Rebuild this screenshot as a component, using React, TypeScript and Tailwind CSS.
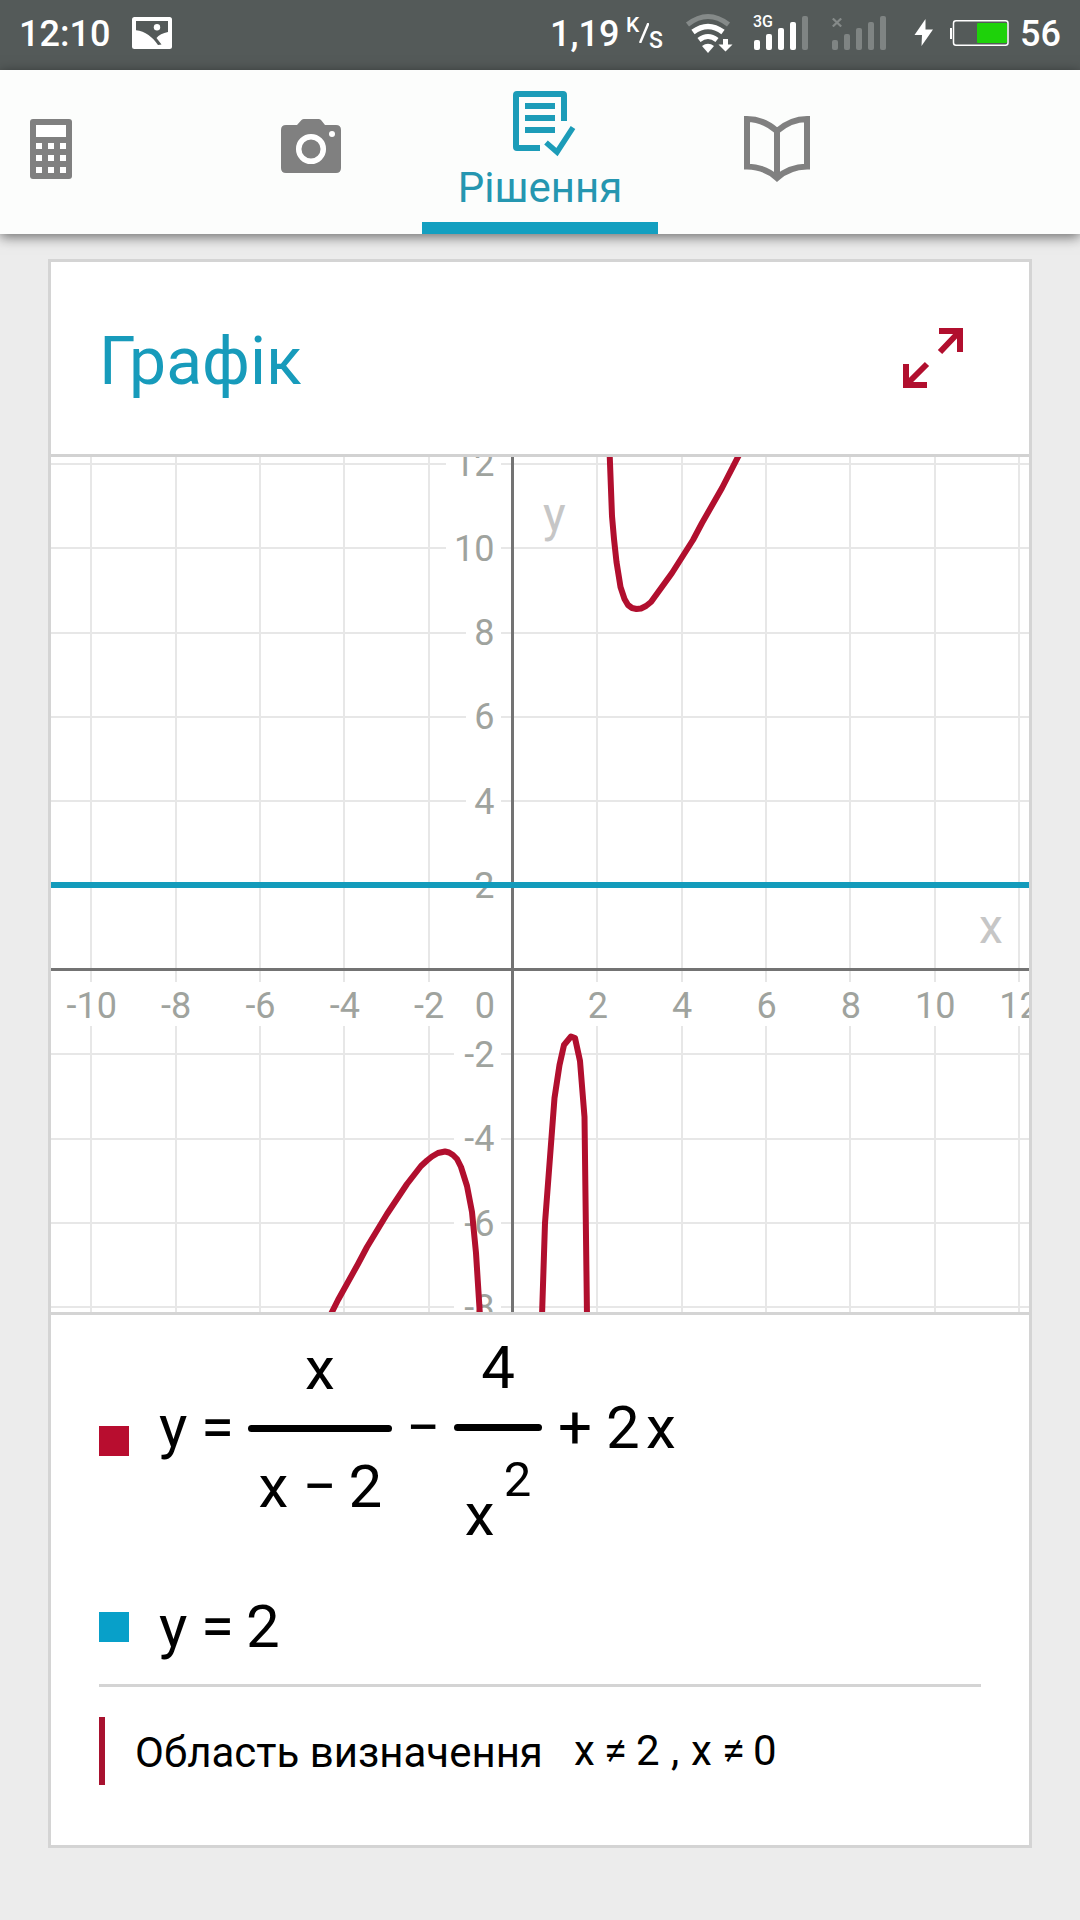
import React from "react";

const RED = "#b10f2e";
const BLUE = "#139bbb";

/* ---------- status bar ---------- */

function PictureIcon() {
  return (
    <svg className="block h-8 w-10 shrink-0" viewBox="132 17 40 32">
      <rect x="132" y="17" width="40" height="32" rx="2.5" fill="#fff" />
      <path d="M136 21H168V32C163 33 158.500 35 156.500 38L161.500 44.500L158 45C153 37.500 145 31 136 30.300Z" fill="#545a59" />
      <circle cx="157" cy="27.300" r="3.200" fill="#fff" />
    </svg>
  );
}

function WifiIcon() {
  return (
    <svg className="block h-[42px] w-[50px] shrink-0" viewBox="684 12 50 42" fill="none" stroke="#fff">
      <path d="M687.500 24.500Q708 8.500 728.500 24.500" stroke="#858a89" strokeWidth="5" />
      <path d="M693 32Q708 21 723 32" strokeWidth="5.500" />
      <path d="M699 40Q708 33 717 40" strokeWidth="5" />
      <path d="M702 46Q708 41.500 714 46L708 53Z" fill="#fff" stroke="none" />
      <path d="M723 39H728V44.500H732.500L725.500 51.500L718.500 44.500H723Z" fill="#fff" stroke="none" />
    </svg>
  );
}

const BARS = [10, 16, 22, 28, 34];

function Signal({ lit, children }: { lit: number; children?: React.ReactNode }) {
  return (
    <div className="relative flex h-[34px] w-[54px] shrink-0 items-end gap-[6px]">
      {BARS.map((h, i) => (
        <span key={h} className={i < lit ? "w-[6px] rounded-[2px] bg-white" : "w-[6px] rounded-[2px] bg-[#7f8483]"} style={{ height: h }} />
      ))}
      {children}
    </div>
  );
}

function StatusBar() {
  return (
    <div className="flex h-[70px] items-start bg-[#545a59] text-[36px] font-medium leading-[36px] text-white">
      <span className="ml-[19px] mt-[16px] w-[93px] whitespace-nowrap">12:10</span>
      <div className="ml-[20px] mt-[17px]"><PictureIcon /></div>
      <span className="ml-[378px] mt-[16px] w-[71px] whitespace-nowrap">1,19</span>
      <div className="ml-[5px] mt-[14px] flex w-[37px] items-start leading-[24px]">
        <span className="-mt-px w-[13px] text-[21px]">K</span>
        <svg className="mt-[9px] h-[20px] w-[10px] shrink-0" viewBox="0 0 10 20" stroke="#fff" strokeWidth="2.500">
          <path d="M1 20L9.500 0" />
        </svg>
        <span className="mt-[15px] text-[23px]">S</span>
      </div>
      <div className="ml-[21px] mt-[12px]"><WifiIcon /></div>
      <div className="ml-[20px] mt-[16px]">
        <Signal lit={4}>
          <span className="absolute -left-px -top-[1px] text-[16px] leading-[14px]">3G</span>
        </Signal>
      </div>
      <div className="ml-[24px] mt-[16px]">
        <Signal lit={0}>
          <svg className="absolute left-0 top-[2px] h-[9px] w-[10px]" viewBox="0 0 10 9" stroke="#858a89" strokeWidth="2.200">
            <path d="M.8.5L9.200 8.500M9.200.5L.8 8.500" />
          </svg>
        </Signal>
      </div>
      <svg className="ml-[28px] mt-[19px] block h-[27px] w-[20px] shrink-0" viewBox="0 0 20 27" fill="#fff">
        <path d="M11.500 0L.5 16H8L7.500 27L19 10.500H11.500Z" />
      </svg>
      <svg className="ml-[16px] mt-[20px] block h-[26px] w-[60px] shrink-0" viewBox="0 0 60 26">
        <rect x="0" y="8" width="2" height="11" fill="#fff" />
        <rect x="3.500" y=".750" width="54.500" height="24.500" rx="2.500" fill="none" stroke="#fff" strokeWidth="1.500" />
        <rect x="27" y="3" width="30" height="20" rx="1" fill="#1ed20a" />
      </svg>
      <span className="ml-[10px] mt-[16px]">56</span>
    </div>
  );
}

/* ---------- tab bar ---------- */

function CalculatorIcon() {
  return (
    <svg className="block h-[60px] w-[42px]" viewBox="0 0 42 60">
      <rect width="42" height="60" rx="3" fill="#808080" />
      <g fill="#fff">
        <rect x="6" y="6" width="30" height="12" />
        {[24, 36, 48].map((y) => [6, 18, 30].map((x) => <rect key={x + "-" + y} x={x} y={y} width="6" height="6" />))}
      </g>
    </svg>
  );
}

function CameraIcon() {
  return (
    <svg className="block h-[54px] w-[60px]" viewBox="0 0 60 54">
      <path d="M5 6H16L20.500 1Q21.500 0 23 0H37.500Q39 0 40 1L44 6H55Q60 6 60 11V49Q60 54 55 54H5Q0 54 0 49V11Q0 6 5 6Z" fill="#808080" />
      <circle cx="30" cy="30" r="12.300" fill="none" stroke="#fff" strokeWidth="5.500" />
      <circle cx="51" cy="15" r="3" fill="#fff" />
    </svg>
  );
}

function SolutionIcon() {
  return (
    <svg className="block h-[66px] w-[64px]" viewBox="513 91 64 66" fill="none" stroke="#1c9cb8" strokeWidth="6">
      <path d="M564 121V95Q564 94 563 94H517Q516 94 516 95V147Q516 148 517 148H540" />
      <path d="M525 106H555M525 118H555M525 130H555" />
      <path d="M546 142.500L557 152L573 127.500" strokeWidth="5.500" />
    </svg>
  );
}

function BookIcon() {
  return (
    <svg className="block h-[68px] w-[66px]" viewBox="0 0 66 68" fill="none" stroke="#808080" strokeWidth="6">
      <path d="M3 3Q19 3 33 15Q47 3 63 3V50.500Q45 51 33 62Q21 51 3 50.500ZM33 15V62" />
    </svg>
  );
}

function TabBar() {
  return (
    <div className="relative z-10 flex h-[164px] items-start bg-[#fcfdfc] shadow-[0_3px_12px_rgba(0,0,0,0.55)]">
      <div className="ml-[30px] mt-[49px]"><CalculatorIcon /></div>
      <div className="ml-[209px] mt-[49px]"><CameraIcon /></div>
      <div className="ml-[81px] flex h-[164px] w-[236px] flex-col border-b-[12px] border-[#139fc0]">
        <div className="ml-[91px] mt-[21px]"><SolutionIcon /></div>
        <span className="mt-[6px] text-center text-[42px] leading-[50px] text-[#2596b0]">Рішення</span>
      </div>
      <div className="ml-[86px] mt-[46px]"><BookIcon /></div>
    </div>
  );
}

/* ---------- graph ---------- */

const TICKS_X = [-10, -8, -6, -4, -2, 2, 4, 6, 8, 10, 12];
const TICKS_Y = [12, 10, 8, 6, 4, 2, -2, -4, -6, -8];
const X0 = 513;
const Y0 = 970;
const UNIT = 42.17;

const BRANCHES = [
  "331,1314 338,1300 358,1264 367,1247 387,1214 407,1184 421,1166 427,1160.500 432,1156.500 438,1153 445,1151.500 449,1152.500 453,1155 457,1159 461,1167 467,1186 472,1212 476,1253 480,1316",
  "542,1316 545,1223 554.500,1098 559.500,1065 564,1045 571,1036.500 575,1038 580,1061 584.500,1117 587,1316",
  "609.500,450 612,516 614,539 616.500,562 620.500,587 624.500,599 628,605 632,608 636.500,609 641,608.500 646,606 651,602 672,573 693,540 702,523 722,488 740,453",
];

function Graph() {
  return (
    <svg className="block h-[855px] w-[978px]" viewBox="51 457 978 855" fontFamily="Roboto, sans-serif">
      <g fill="#e7e7e7">
        {TICKS_X.map((t) => <rect key={t} x={Math.round(X0 + t * UNIT) - 1} y="457" width="2" height="855" />)}
        {TICKS_Y.map((t) => <rect key={t} x="51" y={Math.round(Y0 - t * UNIT) - 1} width="978" height="2" />)}
      </g>
      <g fill="#fff">
        {TICKS_X.map((t) => <rect key={t} x={X0 + t * UNIT - 20} y="982" width="40" height="44" />)}
        {TICKS_Y.map((t) => {
          const left = t > 9 ? 446 : t > 0 ? 466 : 454;
          return <rect key={t} x={left} y={Y0 - t * UNIT - 21} width={501 - left} height="42" />;
        })}
      </g>
      <g fill="#737373">
        <rect x="511" y="457" width="3" height="855" />
        <rect x="51" y="968" width="978" height="3" />
      </g>
      <g fill="#9fa39e" fontSize="36">
        {TICKS_X.map((t) => <text key={t} x={X0 + t * UNIT + 0.5} y="1017.500" textAnchor="middle">{t}</text>)}
        {TICKS_Y.map((t) => <text key={t} x="494.500" y={Y0 - t * UNIT + 12.5} textAnchor="end">{t}</text>)}
        <text x="495" y="1017.500" textAnchor="end">0</text>
      </g>
      <g fill="#c6c6c6" fontSize="48">
        <text x="543" y="530.500">y</text>
        <text x="979" y="942.500">x</text>
      </g>
      <rect x="51" y="882" width="978" height="6" fill={BLUE} />
      {BRANCHES.map((b) => <polyline key={b} points={b} fill="none" stroke={RED} strokeWidth="6" strokeLinejoin="round" />)}
    </svg>
  );
}

/* ---------- formulas ---------- */

function RationalFormula() {
  return (
    <div className="flex h-[179px] items-center text-[60px] leading-[60px] text-black">
      <span className="-mt-[2px] w-[28px] text-center">y</span>
      <span className="ml-[14px] w-[34px]">=</span>
      <div className="ml-[13px] flex w-[144px] flex-col items-center">
        <span>x</span>
        <span className="my-[26px] h-[7px] w-full rounded-full bg-black" />
        <div className="-mt-px flex">
          <span className="w-[30px]">x</span>
          <span className="ml-[14px] w-[34px]">−</span>
          <span className="ml-[12px] w-[33px]">2</span>
        </div>
      </div>
      <span className="ml-[14px] w-[34px]">−</span>
      <div className="ml-[14px] flex w-[88px] flex-col items-center">
        <span>4</span>
        <span className="my-[26px] h-[7px] w-full rounded-full bg-black" />
        <div className="flex h-[60px] items-start">
          <span className="mt-[28px] w-[30px]">x</span>
          <span className="-mt-[2px] ml-[9px] text-[49px] leading-[49px]">2</span>
        </div>
      </div>
      <span className="ml-[16px] w-[34px]">+</span>
      <span className="ml-[14px] w-[34px]">2</span>
      <span className="ml-[6px] w-[30px]">x</span>
    </div>
  );
}

export default function App() {
  return (
    <div className="flex h-[1920px] w-[1080px] flex-col overflow-hidden bg-[#ececec] font-[Roboto,sans-serif]">
      <StatusBar />
      <TabBar />
      <div className="ml-[48px] mt-[25px] flex h-[1589px] w-[984px] flex-col border-[3px] border-[#d4d4d4] bg-white">
        <div className="flex h-[195px] shrink-0 items-start justify-between border-b-[3px] border-[#d2d2d2] pl-[48px] pr-[66px]">
          <h1 className="mt-[60px] text-[66px] leading-[80px] text-[#179bbb]">Графік</h1>
          <svg className="mt-[66px] block h-[60px] w-[60px]" viewBox="0 0 60 60" fill="none" stroke={RED} strokeWidth="6">
            <path d="M36 3H57V24M56 4L37 24M3 36V57H24M4 56L24 36" />
          </svg>
        </div>
        <Graph />
        <div className="flex flex-col border-t-[3px] border-[#d4d4d4] px-[48px]">
          <div className="mt-[23px] flex items-start">
            <span className="mt-[88px] h-[30px] w-[30px] bg-[#b80d2f]" />
            <div className="ml-[30px]"><RationalFormula /></div>
          </div>
          <div className="mt-[80px] flex items-start text-[60px] leading-[60px] text-black">
            <span className="mt-[15px] h-[30px] w-[30px] bg-[#08a0c9]" />
            <span className="ml-[30px] w-[28px] text-center">y</span>
            <span className="ml-[14px] w-[34px]">=</span>
            <span className="ml-[11px]">2</span>
          </div>
          <div className="mt-[27px] h-[3px] bg-[#d4d4d4]" />
          <div className="mt-[30px] flex h-[68px] items-start border-l-[6px] border-[#a8122f] text-[42px] leading-[50px] text-black">
            <span className="ml-[30px] mt-[11px] w-[404px] whitespace-nowrap">Область визначення</span>
            <div className="ml-[35px] mt-[9px] flex">
              <span className="w-[21px]">x</span>
              <span className="ml-[9px] w-[25px]">≠</span>
              <span className="ml-[7px] w-[24px]">2</span>
              <span className="ml-[11px] w-[9px]">,</span>
              <span className="ml-[11px] w-[21px]">x</span>
              <span className="ml-[10px] w-[25px]">≠</span>
              <span className="ml-[6px] w-[24px]">0</span>
            </div>
          </div>
        </div>
      </div>
    </div>
  );
}
